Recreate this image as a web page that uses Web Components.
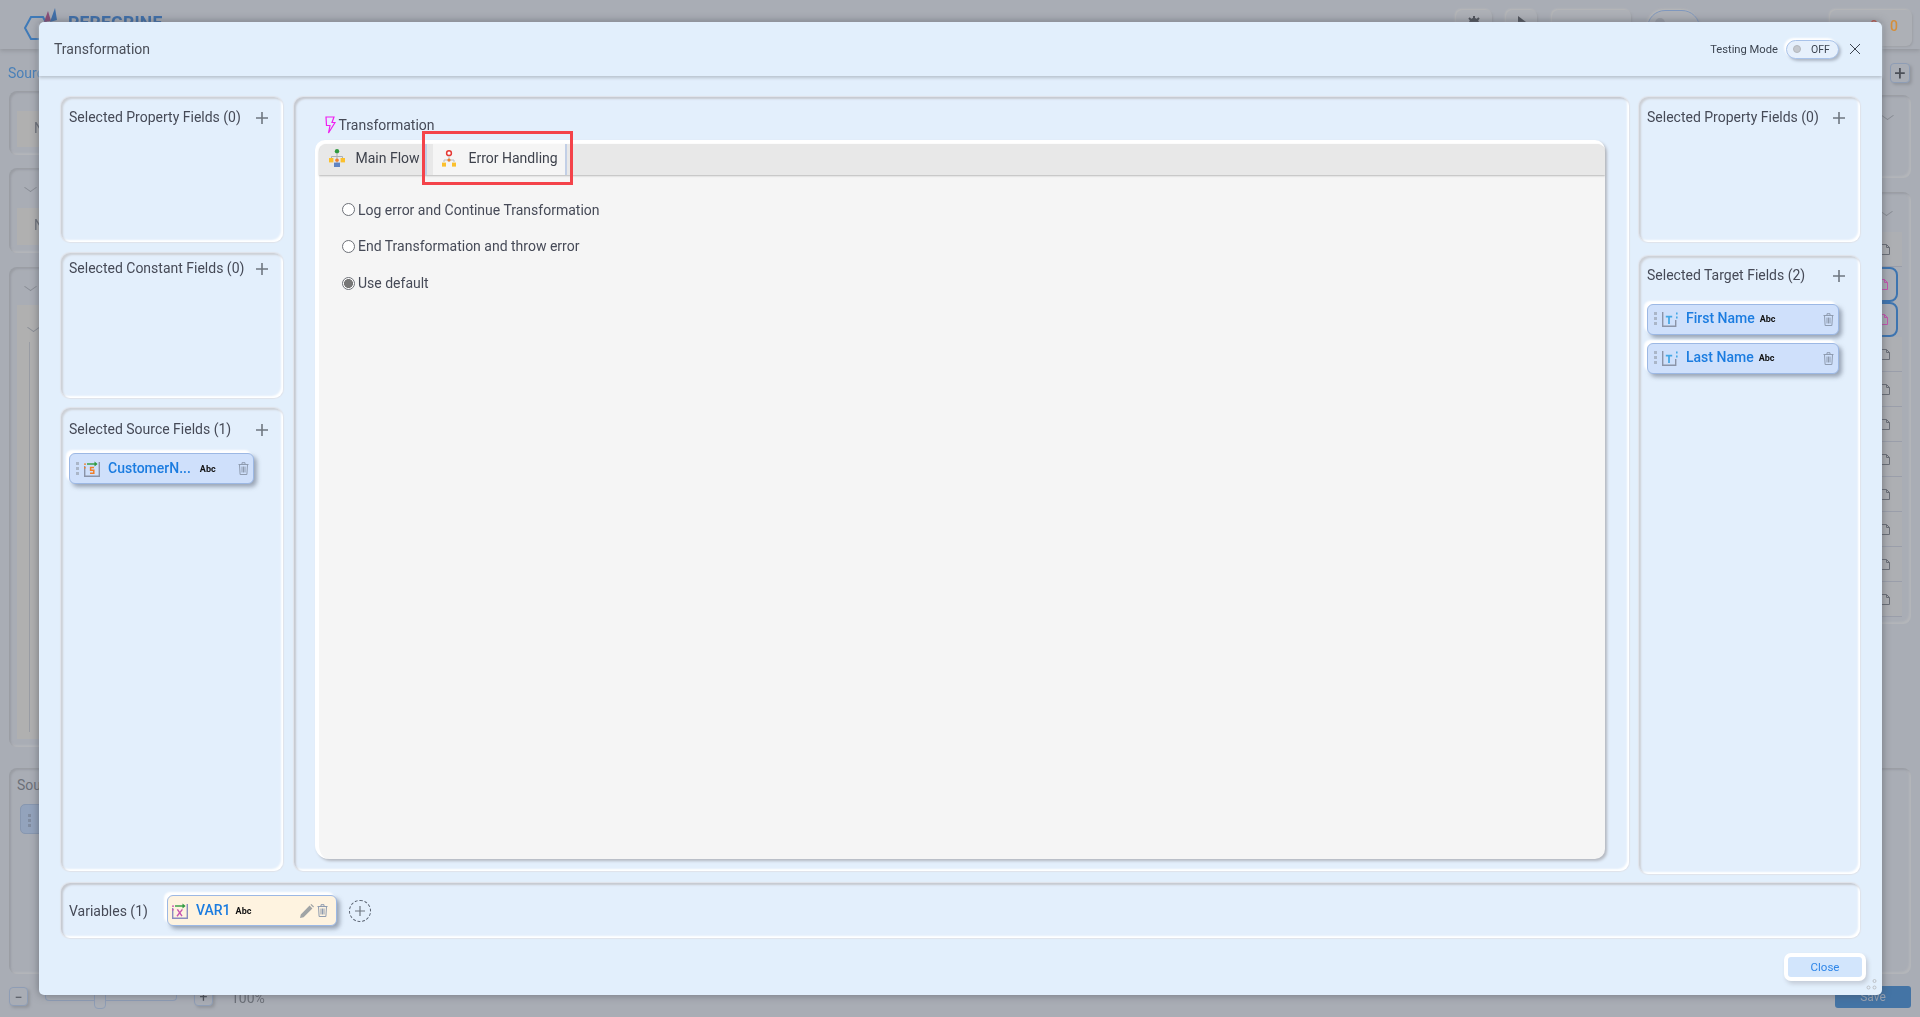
<!DOCTYPE html>
<html lang="en">
<head>
<meta charset="utf-8">
<title>Transformation</title>
<style>
  html, body { margin: 0; height: 100%; overflow: hidden; background: #a9adb5; font-family: Roboto, "Liberation Sans", sans-serif; }
</style>
</head>
<body>
<app-backdrop></app-backdrop>

<transform-dialog heading="Transformation">
  <div slot="left" style="display:contents">
    <field-panel heading="Selected Property Fields (0)" style="height:145px"></field-panel>
    <field-panel heading="Selected Constant Fields (0)" style="height:145px;--title-top:6px"></field-panel>
    <field-panel heading="Selected Source Fields (1)" style="flex:1;--title-top:12px;--head-gap:15px">
      <field-chip label="CustomerN..." type="source"></field-chip>
    </field-panel>
  </div>
  <flow-editor slot="center"></flow-editor>
  <div slot="right" style="display:contents">
    <field-panel heading="Selected Property Fields (0)" style="height:145px"></field-panel>
    <field-panel heading="Selected Target Fields (2)" style="flex:1;margin-top:3px;--title-top:10px;--head-gap:20px">
      <field-chip label="First Name" type="target"></field-chip>
      <field-chip label="Last Name" type="target"></field-chip>
    </field-panel>
  </div>
  <variables-bar slot="vars"></variables-bar>
</transform-dialog>

<script>
// small inline icons shared by the components
const ICONS = {
  plus: `<svg width="12" height="12" viewBox="0 0 12 12"><path d="M6 0v12M0 6h12" stroke="#6f7780" stroke-width="1.6"/></svg>`,
  close: `<svg width="12" height="12" viewBox="0 0 12 12"><path d="M1 1l10 10M11 1L1 11" stroke="#3c4450" stroke-width="1" fill="none"/></svg>`,
  bolt: `<svg width="11" height="18" viewBox="0 0 11 18"><path d="M1 1h8L7 6.5h3L3.5 17 5 9.5H1.5z" fill="none" stroke="#f01ff0" stroke-width="1.2"/></svg>`,
  trash: `<svg width="11" height="13" viewBox="0 0 11 13" fill="none" stroke="#8f9cb0" stroke-width="1"><path d="M.5 2.5h10M4 2.5V.7h3v1.8M1.5 2.5l.6 10h6.8l.6-10M4 4.5v6M5.5 4.5v6M7 4.5v6"/></svg>`,
  pencil: `<svg width="14" height="14" viewBox="0 0 14 14"><path d="M0 14l.8-3.6L9.6 1.6 12.4 4.4 3.6 13.2zM10.4.8l1-.8 2.6 2.6-.8 1z" fill="#a0a4a6"/></svg>`,
  source: `<svg width="16" height="16" viewBox="0 0 16 16"><path d="M.7 5v10.3h14.6V1" fill="none" stroke="#8b94a8" stroke-width="1.4"/><path d="M3 3h9" stroke="#2f9a3f" stroke-width="1.4"/><path d="M10.5 .6L13.6 3l-3.1 2.4z" fill="#2f9a3f"/><path d="M0 2.4h2v1.4H0zM0 6h1.6v1.4H0z" fill="#f07f2a"/><path d="M10 6.6H6.6v2.6h3.2v3H6" fill="none" stroke="#f07f2a" stroke-width="1.5"/></svg>`,
  target: `<svg width="16" height="16" viewBox="0 0 16 16"><path d="M.7 1v14.3h13V9" fill="none" stroke="#8b94a8" stroke-width="1.4"/><path d="M3.8 5.6h6.4M7 5.6V13" stroke="#45a8e6" stroke-width="1.8" fill="none"/><path d="M14 1.6h1.6v1.8H14zM14 5.4h1.6v2.2H14z" fill="#45a8e6"/></svg>`,
  variable: `<svg width="16" height="16" viewBox="0 0 16 16"><path d="M.7 5v10.3h14.6V1" fill="none" stroke="#8a8cc0" stroke-width="1.4"/><path d="M3 3h9" stroke="#2f9a3f" stroke-width="1.4"/><path d="M10.5 .6L13.6 3l-3.1 2.4z" fill="#2f9a3f"/><path d="M0 2.4h2v1.4H0zM0 6h1.6v1.4H0z" fill="#c653b0"/><path d="M5.4 6.4l4.6 6.8M10.4 6.4L5 13.2" stroke="#c653b0" stroke-width="1.4" fill="none"/></svg>`,
  mainFlow: `<svg width="16" height="18" viewBox="0 0 16 18"><circle cx="8" cy="2.2" r="2.2" fill="#2f9a3f"/><path d="M8 4v12M2.5 7.5h11v2M2.5 7.5v2" stroke="#a9b0b8" fill="none"/><rect x="0" y="9" width="4.4" height="4.4" fill="#fbc02d"/><rect x="11.6" y="9" width="4.4" height="4.4" fill="#fbc02d"/><rect x="6.2" y="9.4" width="3.6" height="3.4" rx="1.6" fill="#f07f2a"/><rect x="5" y="13.6" width="6" height="4.4" fill="#5f84c4"/></svg>`,
  errorFlow: `<svg width="14" height="17" viewBox="0 0 14 17"><circle cx="7" cy="3.2" r="2.4" fill="#fff" stroke="#e53935" stroke-width="1.5"/><path d="M7 6v6M2 10h10v2M2 10v2" stroke="#b8bcc2" fill="none"/><rect x="5.4" y="8.4" width="3.2" height="3.2" rx="1.5" fill="#f07f2a"/><rect x="0" y="12.6" width="4" height="4" fill="#fbc02d"/><rect x="10" y="12.6" width="4" height="4" fill="#fbc02d"/></svg>`,
  doc: c => `<svg width="9" height="11" viewBox="0 0 9 11"><path d="M.5.5h5l3 3v7h-8zM5.5.5v3h3" fill="none" stroke="${c}"/></svg>`,
};

// the application behind the modal, already dimmed
class AppBackdrop extends HTMLElement {
  constructor() {
    super();
    this.attachShadow({ mode: 'open' }).innerHTML = `
      <style>
        :host { display: block; height: 1017px; background: #a9adb5; overflow: hidden; color: #6c7078; font: 14px Roboto, sans-serif; }
        .wrap { filter: blur(.4px); }
        header { height: 49px; box-sizing: border-box; display: flex; align-items: flex-start; padding: 8px 8px 0 24px; box-shadow: 0 2px 4px #94979e; }
        .logo { display: flex; gap: 4px; }
        .logo b { font: 700 17.5px Roboto, sans-serif; color: #3f6fa9; margin-top: 5px; letter-spacing: .2px; }
        .tools { margin-left: auto; display: flex; padding-top: 2px; }
        .tool { height: 36px; box-sizing: border-box; background: #adb0b6; border-radius: 6px; box-shadow: -1px -1px 2px #b9b9b9, 1px 1px 2px #9c9fa6; display: flex; justify-content: center; padding-top: 6px; }
        main { display: flex; justify-content: space-between; }
        .col { display: flex; flex-direction: column; }
        .left { width: 300px; padding-left: 9px; }
        .right { width: 251px; padding-right: 9px; align-items: stretch; }
        .src { color: #4a80b8; line-height: 18px; margin: 15px 0 9px -1px; }
        .p { box-sizing: border-box; border-radius: 8px; background: #a9adb5; box-shadow: inset 2px 2px 2px #9a9da4, inset -2px -2px 2px #b4b6ba; padding: 8px; position: relative; }
        .inner { background: #b0b0b0; }
        .chev { width: 8px; height: 8px; border-right: 1.4px solid #878b93; border-bottom: 1.4px solid #878b93; transform: scaleY(.7) rotate(45deg); margin: 3px 0 0 9px; }
        .row { height: 35px; box-sizing: border-box; border-bottom: 1px solid #9a9eaa; background: #adafb3; display: flex; align-items: center; justify-content: flex-end; padding-right: 12px; }
        .row.sel { border: 2px solid #3d74b0; border-radius: 0 8px 8px 0; margin-right: 4px; padding-right: 8px; background: none; }
        .btn { box-sizing: border-box; border: 1px solid #8e9db5; border-radius: 4px; box-shadow: 2px 2px 3px #93969d; background: #a9adb5; color: #4c5058; display: flex; align-items: center; justify-content: center; }
        .zoom { display: flex; align-items: flex-start; margin-top: 13px; }
        .track { width: 132px; height: 14px; border: 1px solid #8e9db5; border-top: 0; border-radius: 0 0 4px 4px; margin: 0 17px 0 17px; position: relative; box-sizing: border-box; }
        .thumb { position: absolute; left: 48px; top: 0; width: 12px; height: 22px; border: 1px solid #8e9db5; border-radius: 0 0 4px 4px; box-sizing: border-box; background: #a9adb5; }
        .save { width: 76px; height: 22px; margin: 12px 0 0 auto; background: #4474a5; border-radius: 3px; color: #9aa5b5; font-size: 12px; text-align: center; line-height: 22px; }
        .vchip { margin: 11px 0 0 3px; width: 60px; height: 30px; background: #93a3bc; border: 1px solid #8797b0; box-sizing: border-box; border-radius: 5px; padding: 9px 0 0 7px; }
        .vchip i { display: block; width: 3px; height: 14px; background: repeating-linear-gradient(#808ca0 0 3px, transparent 3px 5px); }
      </style>
      <div class="wrap">
        <header>
          <div class="logo">
            <svg width="40" height="34" viewBox="0 0 40 34"><path d="M1 20l6-11h12l6 11-6 11H7z" fill="none" stroke="#3f7ab8" stroke-width="2"/><path d="M20 14L24 3l3 10z" fill="#8a4e78"/><path d="M26 14l5-14 2 12z" fill="#3f6fa9"/></svg>
            <b>PEREGRINE</b>
          </div>
          <div class="tools">
            <div class="tool" style="width:36px"><svg width="14" height="14" viewBox="0 0 14 14"><circle cx="7" cy="7" r="5" fill="#50545c"/><path d="M7 0v14M0 7h14M2 2l10 10M12 2L2 12" stroke="#50545c" stroke-width="2"/></svg></div>
            <div class="tool" style="width:31px;margin-left:14px"><svg width="10" height="12" viewBox="0 0 10 12"><path d="M1 0l8 6-8 6z" fill="#50545c"/></svg></div>
            <div class="tool" style="width:79px;margin-left:15px"></div>
            <div class="tool" style="width:53px;margin-left:16px;border:1px solid #7f97bd;border-radius:18px;justify-content:flex-start;padding-left:6px"><svg width="12" height="12"><circle cx="6" cy="6" r="5" fill="#9a9ea6"/></svg></div>
            <div style="width:110px;margin-left:10px;color:#73767d;padding-top:12px;white-space:nowrap">Show mode</div>
            <div class="tool" style="width:82px;margin-left:10px;padding:8px 14px 0 0;justify-content:flex-end;gap:12px;font-weight:500;line-height:16px"><span style="color:#c05a50">0</span><span style="color:#d48f3c">0</span></div>
          </div>
        </header>
        <main>
          <div class="col left">
            <div class="src">Source</div>
            <div class="p" style="height:64px;padding:20px 0 0 8px"><div class="inner" style="height:36px;padding:9px 0 0 17px;box-sizing:border-box">N</div></div>
            <div class="p" style="height:85px;margin-top:13px;padding:12px 0 0 8px"><div class="chev"></div><div class="inner" style="height:37px;margin-top:16px;padding:9px 0 0 17px;box-sizing:border-box">N</div></div>
            <div class="p" style="height:480px;margin-top:14px;padding:12px 0 0 8px"><div class="chev"></div><div class="inner" style="height:434px;margin-top:14px;padding:15px 0 0 12px;box-sizing:border-box"><div class="chev" style="margin-left:0"></div><div style="border-left:1px solid #9a9da4;height:390px;margin-top:10px"></div></div></div>
            <div class="p" style="height:206px;margin-top:21px;padding:9px 0 0 8px"><div>Sou</div><div class="vchip"><i></i></div></div>
            <div class="zoom">
              <div class="btn" style="width:19px;height:19px">&minus;</div>
              <div class="track"><div class="thumb"></div></div>
              <div class="btn" style="width:19px;height:19px">+</div>
              <div style="margin-left:18px;line-height:22px">100%</div>
            </div>
          </div>
          <div class="col right">
            <div class="btn" style="width:20px;height:20px;margin:14px 1px 12px auto;font-size:20px">+</div>
            <div class="p" style="height:83px;padding:16px 8px 0 0"><div class="chev" style="margin:0 11px 0 auto"></div><div class="inner" style="height:53px;margin-top:-4px;position:relative;z-index:-1"></div></div>
            <div class="p" style="height:432px;margin-top:14px;padding:15px 9px 0 0">
              <div class="chev" style="margin:0 11px 5px auto"></div>
              <div id="rows" style="margin-top:16px"></div>
            </div>
            <div class="p" style="height:206px;margin-top:144px"></div>
            <div class="save">Save</div>
          </div>
        </main>
      </div>`;
    const rows = this.shadowRoot.getElementById('rows');
    for (let i = 0; i < 11; i++) {
      const sel = i === 1 || i === 2;
      rows.insertAdjacentHTML('beforeend', `<div class="row ${sel ? 'sel' : ''}">${ICONS.doc(sel ? '#c653b0' : '#6a6e76')}</div>`);
    }
  }
}

class TransformDialog extends HTMLElement {
  constructor() {
    super();
    this.attachShadow({ mode: 'open' }).innerHTML = `
      <style>
        :host { position: fixed; left: 39px; top: 22px; width: 1843px; height: 973px; display: flex; flex-direction: column; background: #e2effc; border-radius: 5px; box-shadow: 0 0 8px rgba(70,75,85,.6); color: #464a57; font: 14px Roboto, sans-serif; }
        header { height: 54px; flex: none; box-sizing: border-box; display: flex; align-items: center; padding: 0 21px 0 15px; box-shadow: 0 2px 3px #b9c2cd; }
        .title { flex: 1; color: #4a4e58; }
        .test { font-size: 11.2px; color: #3c4450; margin-right: 8px; }
        .toggle { width: 53px; height: 19px; box-sizing: border-box; border: 1px solid #a9c3ea; border-radius: 10px; background: #e6f0fc; box-shadow: -2px -2px 2px #fff, 2px 2px 3px #aeb8c6; display: flex; align-items: center; font-size: 10.5px; color: #3c4450; padding-left: 6px; margin-right: 10px; }
        .toggle i { width: 8px; height: 8px; border-radius: 50%; background: #c4c8ce; border: 1px solid #b4b8be; box-sizing: border-box; margin-right: 10px; }
        svg { display: block; }
        .body { flex: none; height: 777px; margin: 21px 22px 0 22px; display: grid; grid-template-columns: 222px 1335px 221px; column-gap: 10.5px; }
        .col { display: flex; flex-direction: column; gap: 10.5px; height: 774px; }
        .col.r { height: 777px; }
        .vars { margin: 9px 22px 0 22px; }
        footer { display: flex; justify-content: flex-end; padding: 19px 20px 0 0; }
        button { width: 74px; height: 20px; border: 0; border-radius: 3px; background: #d2e5fc; color: #2f86e8; font: 11.5px Roboto, sans-serif; box-shadow: 0 0 0 4px #fff, 2px 3px 4px 4px #c4ccd8; }
        .grip { position: absolute; right: 5px; bottom: 5px; }
      </style>
      <header>
        <div class="title">${this.getAttribute('heading')}</div>
        <div class="test">Testing Mode</div>
        <div class="toggle"><i></i>OFF</div>
        ${ICONS.close}
      </header>
      <div class="body">
        <div class="col"><slot name="left"></slot></div>
        <slot name="center"></slot>
        <div class="col r"><slot name="right"></slot></div>
      </div>
      <div class="vars"><slot name="vars"></slot></div>
      <footer><button>Close</button></footer>
      <svg class="grip" width="11" height="11" viewBox="0 0 11 11" fill="none" stroke="#bcc0c6"><circle cx="8.5" cy="2" r="1.5"/><circle cx="2.5" cy="8.5" r="1.5"/><circle cx="8.5" cy="8.5" r="1.5"/></svg>`;
  }
}

class FieldPanel extends HTMLElement {
  constructor() {
    super();
    this.attachShadow({ mode: 'open' }).innerHTML = `
      <style>
        :host { display: block; box-sizing: border-box; border-radius: 9px; background: #e3effc; padding: var(--title-top, 11px) 15px 8px 8px;
          box-shadow: inset 2px 2px 2px #cdd0d6, inset -2px -2px 2px #fff, 0 0 1px 1px #e0e3ea; }
        .head { display: flex; justify-content: space-between; align-items: center; height: 18px; margin: 0 0 var(--head-gap, 17px); white-space: nowrap; }
        svg { display: block; margin-top: 2px; }
        .list { display: flex; flex-direction: column; gap: 8px; }
      </style>
      <div class="head"><span>${this.getAttribute('heading')}</span>${ICONS.plus}</div>
      <div class="list"><slot></slot></div>`;
  }
}

class FieldChip extends HTMLElement {
  constructor() {
    super();
    const type = this.getAttribute('type');
    const isVar = type === 'variable';
    this.attachShadow({ mode: 'open' }).innerHTML = `
      <style>
        :host { display: flex; align-items: center; box-sizing: border-box; height: 31px; width: ${isVar ? '170px' : type === 'source' ? '185px' : '192px'}; border: 1px solid #9cb8e4; border-radius: 6px; background: ${isVar ? '#fef3e0' : '#cfe0fb'}; padding: 0 ${isVar ? '8px' : '4px'} 0 ${isVar ? '4px' : '6px'}; box-shadow: -3px -3px 2px #fff, 3px 3px 4px rgba(95,105,125,.55); }
        .drag { width: 3px; height: 14px; margin-right: 5px; background: repeating-linear-gradient(#aab6c8 0 3px, transparent 3px 5px); }
        svg { display: block; flex: none; }
        .label { font-weight: 500; color: #1b7ce0; margin: -2px 0 0 8px; white-space: nowrap; }
        .abc { font: 700 9px Roboto, "Liberation Sans", sans-serif; color: #111; margin-left: ${type === 'source' ? '9px' : '5px'}; }
        .end { margin-left: auto; display: flex; align-items: center; gap: 3px; }
      </style>
      ${isVar ? '' : '<span class="drag"></span>'}
      ${ICONS[type]}
      <span class="label">${this.getAttribute('label')}</span>
      <span class="abc">Abc</span>
      <span class="end">${isVar ? ICONS.pencil : ''}${ICONS.trash}</span>`;
  }
}

class FlowEditor extends HTMLElement {
  constructor() {
    super();
    this.attachShadow({ mode: 'open' }).innerHTML = `
      <style>
        :host { display: block; box-sizing: border-box; height: 774px; border-radius: 9px; background: #e3effc; padding: 18px 24px 12px 21px; box-shadow: inset 2px 2px 2px #c6c9d0, inset -2px -2px 2px #fff, 0 0 1px 1px #e0e3ea; }
        .title { display: flex; align-items: center; gap: 3px; height: 20px; margin: 0 0 5px 10px; }
        .card { position: relative; box-sizing: border-box; height: 719px; background: #f5f5f5; border-top: 4px solid #fff; border-left: 4px solid #fff; border-radius: 10px 10px 10px 14px; box-shadow: 2px 2px 3px #b4b8c0; }
        .tabs { height: 31px; display: flex; background: #e8e8e8; box-shadow: 0 1px 2px #b9b9b9; border-radius: 8px 8px 0 0; color: #3e424c; }
        .tab { display: flex; align-items: center; box-sizing: border-box; padding-bottom: 3px; }
        .main { width: 108px; padding-left: 10px; gap: 11px; border-right: 2px solid #c2cfe6; }
        .err { width: 134px; margin-left: 6px; padding-left: 9px; gap: 13px; background: #f5f5f5; border-right: 2px solid #c2cfe6; }
        .mark { position: absolute; left: 103px; top: -13px; width: 151px; height: 54px; box-sizing: border-box; border: 3px solid #f4434a; }
        .options { padding: 23.5px 0 0 23.5px; display: flex; flex-direction: column; gap: 14.8px; color: #464a57; }
        label { display: flex; align-items: center; gap: 3px; height: 22px; }
        input { appearance: none; width: 13px; height: 13px; margin: 0; border: 1px solid #6d7178; border-radius: 50%; background: #fff; }
        input:checked { background: radial-gradient(circle, #777 0 4.2px, #fff 4.8px); }
        svg { display: block; }
      </style>
      <div class="title">${ICONS.bolt}<span>Transformation</span></div>
      <div class="card">
        <div class="tabs">
          <div class="tab main">${ICONS.mainFlow}<span>Main Flow</span></div>
          <div class="tab err">${ICONS.errorFlow}<span>Error Handling</span></div>
        </div>
        <div class="mark"></div>
        <div class="options">
          <label><input type="radio" name="onerr">Log error and Continue Transformation</label>
          <label><input type="radio" name="onerr">End Transformation and throw error</label>
          <label><input type="radio" name="onerr" checked>Use default</label>
        </div>
      </div>`;
  }
}

class VariablesBar extends HTMLElement {
  constructor() {
    super();
    this.attachShadow({ mode: 'open' }).innerHTML = `
      <style>
        :host { display: flex; align-items: center; box-sizing: border-box; height: 55px; border-radius: 9px; background: #e3effc; padding: 0 8px; box-shadow: inset 2px 2px 2px #c6c9d0, inset -2px -2px 2px #fff, 0 0 1px 1px #e0e3ea; }
        span { width: 98px; }
        .add { width: 22px; height: 22px; box-sizing: border-box; margin-left: 12px; border: 1px dashed #596270; border-radius: 50%; display: flex; align-items: center; justify-content: center; }
        svg { display: block; }
      </style>
      <span>Variables (1)</span>
      <slot></slot>
      <div class="add"><svg width="10" height="10" viewBox="0 0 10 10"><path d="M5 0v10M0 5h10" stroke="#6f7780" stroke-width="1.2"/></svg></div>`;
    this.innerHTML = '<field-chip label="VAR1" type="variable"></field-chip>';
  }
}

customElements.define('app-backdrop', AppBackdrop);
customElements.define('transform-dialog', TransformDialog);
customElements.define('field-panel', FieldPanel);
customElements.define('field-chip', FieldChip);
customElements.define('flow-editor', FlowEditor);
customElements.define('variables-bar', VariablesBar);
</script>
</body>
</html>
